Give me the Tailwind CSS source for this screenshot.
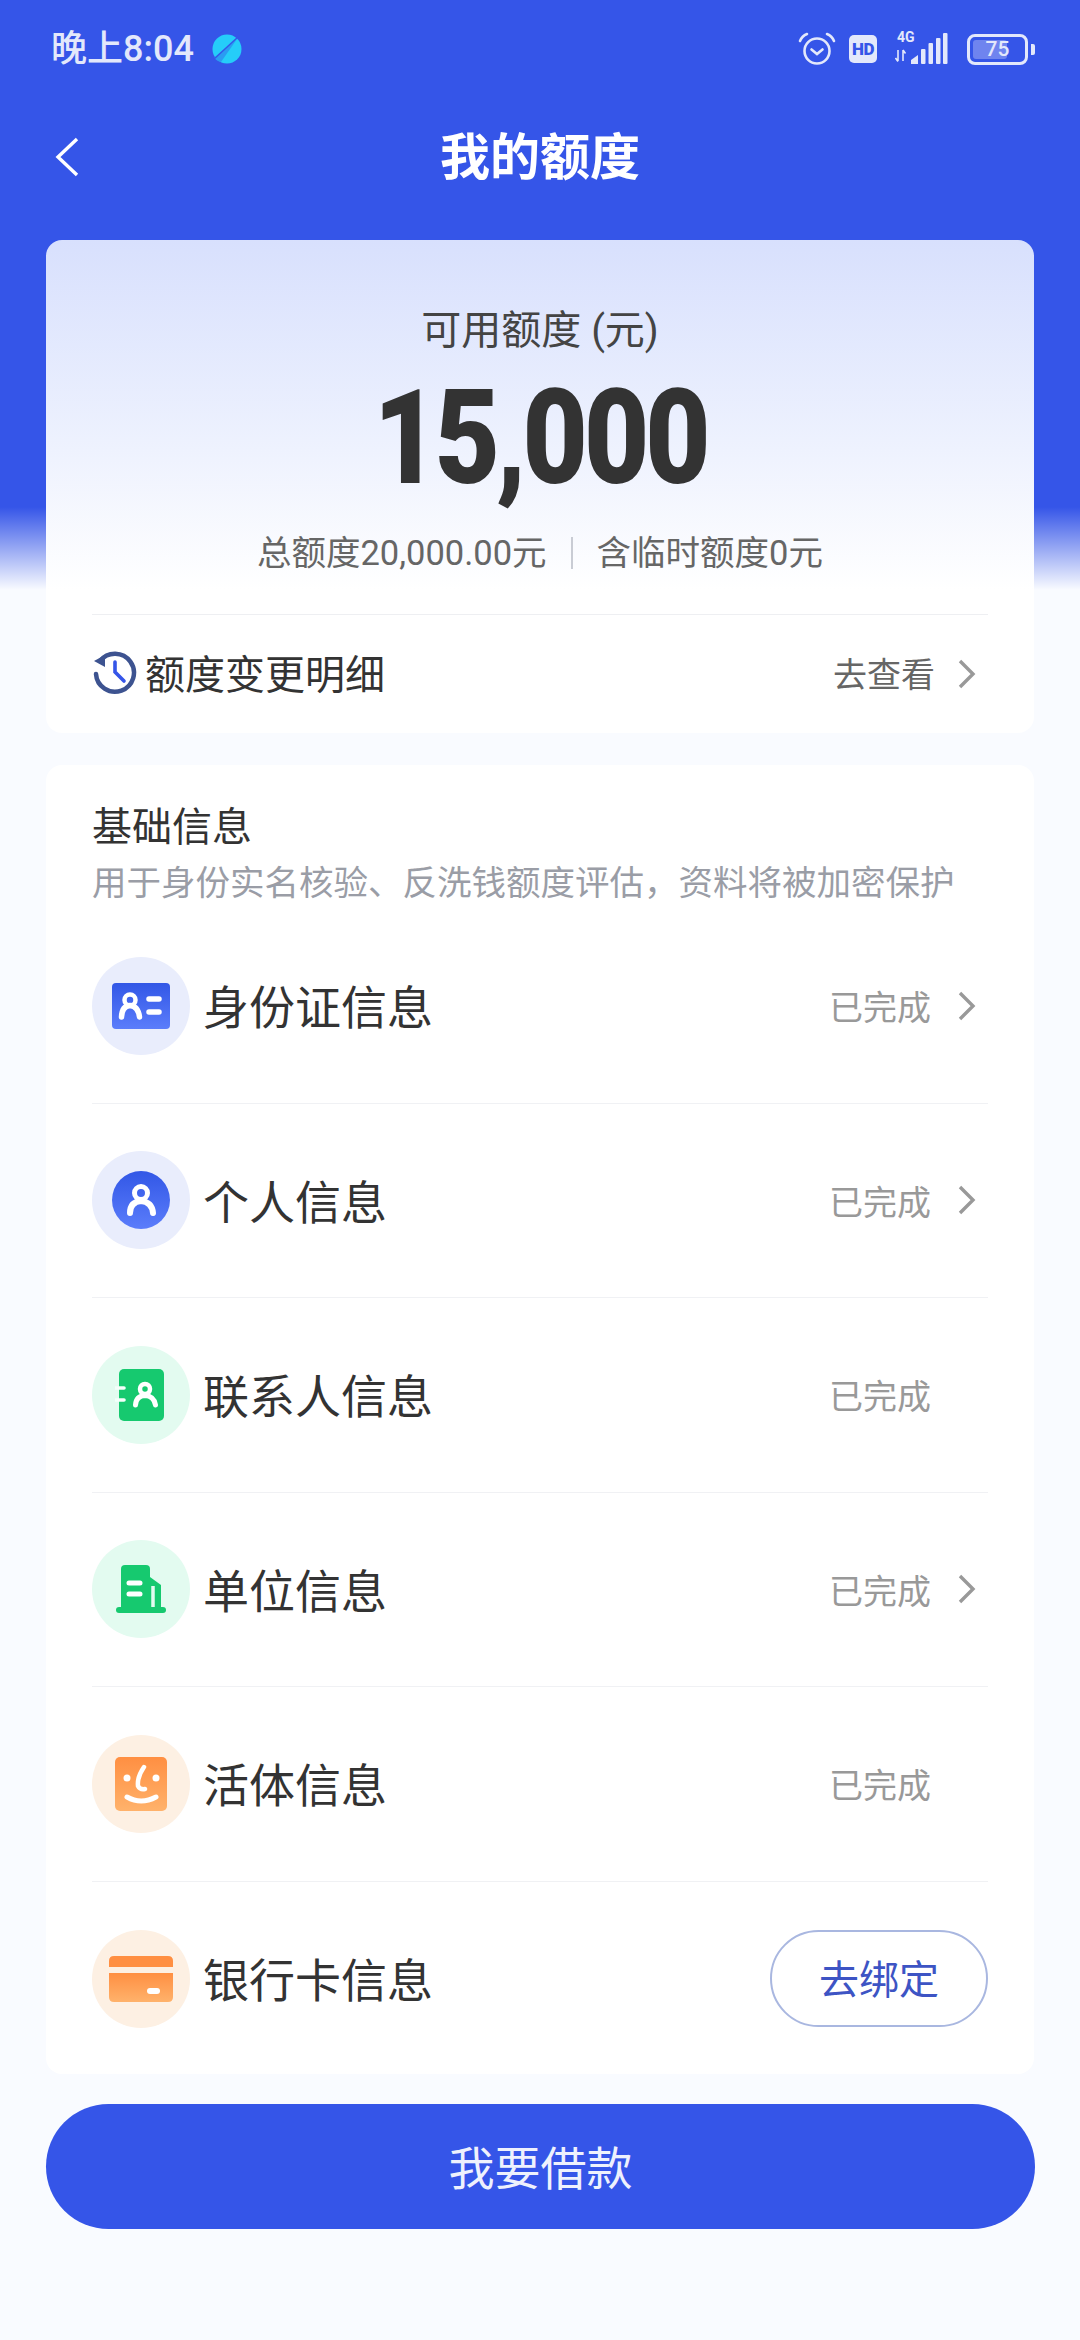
<!DOCTYPE html>
<html lang="zh-CN">
<head>
  <meta charset="UTF-8" />
  <meta name="viewport" content="width=device-width, initial-scale=1.0" />
  <title>我的额度</title>
  <script src="https://cdn.jsdelivr.net/npm/@tailwindcss/browser@4"></script>
</head>

<body class="font-[family-name:Roboto,'Noto_Sans_CJK_SC',sans-serif]">
  <div class="w-[1080px] h-[2340px] overflow-hidden bg-[linear-gradient(#3555e8_0,#3555e8_507px,#f9fbff_590px)]">

    <!-- status bar -->
    <div class="h-[98px] pl-[51px] pr-[45px] flex items-center justify-between text-[#e3e8fb]">
      <div class="flex items-center">
        <span class="text-[36px] font-medium leading-none">晚上8:04</span>
        <svg class="ml-[18px]" width="30" height="30" viewBox="0 0 30 30">
          <circle cx="15" cy="15" r="14.5" fill="#25cdf9" />
          <path d="M2 24 A14.5 14.5 0 0 0 9 28 L25 5 Z" fill="#2a9cf2" />
          <path d="M2 25 L26 3" stroke="#3555e8" stroke-width="1.5" />
        </svg>
      </div>
      <div class="flex items-center">
        <svg width="38" height="34" viewBox="0 0 38 34" fill="none" stroke="#e3e8fb" stroke-width="2.6" stroke-linecap="round">
          <circle cx="19" cy="19" r="12.5" />
          <path d="M13.5 17.5 L19 22 L24.5 17.5" />
          <path d="M2 9 Q4 4 9 2" />
          <path d="M36 9 Q34 4 29 2" />
        </svg>
        <div class="ml-[13px] w-[28px] h-[28px] rounded-[5px] bg-[#e3e8fb] text-[#3555e8] text-[17px] font-black tracking-tight leading-[28px] text-center">HD</div>
        <div class="ml-[18px] relative w-[56px] h-[32px]">
          <span class="absolute left-[2px] top-[-3px] text-[14px] font-bold leading-[14px]">4G</span>
          <svg class="absolute left-0 top-0" width="56" height="32" viewBox="0 0 56 32" fill="#e3e8fb">
            <path d="M3 17v11M0.5 25l2.5 3.5M8 28V17M8 17l2.5 3.5" stroke="#e3e8fb" stroke-width="1.6" fill="none" />
            <path d="M16 27 L23 22 V31 H16 Z" />
            <rect x="26" y="16" width="4.5" height="15" rx="1" />
            <rect x="33.5" y="10" width="4.5" height="21" rx="1" />
            <rect x="41" y="5" width="4.5" height="26" rx="1" />
            <rect x="48" y="0" width="4.5" height="31" rx="1" />
          </svg>
        </div>
        <div class="ml-[16px] relative w-[61px] h-[31px] rounded-[8px] border-[3px] border-[#e3e8fb] p-[3px]">
          <div class="h-full w-[34px] rounded-[3px] bg-[#6f84ef]"></div>
          <span class="absolute inset-0 text-center text-[21px] font-medium leading-[25px]">75</span>
        </div>
        <div class="ml-[3px] w-[4px] h-[11px] rounded-r-[2px] bg-[#e3e8fb]"></div>
      </div>
    </div>

    <!-- nav -->
    <div class="relative h-[118px] mb-[24px] flex items-center justify-center">
      <svg class="absolute left-[54px] top-[39px]" width="26" height="40" viewBox="0 0 26 40" fill="none" stroke="#fff" stroke-width="3.4">
        <path d="M23 2 L4 20 L23 38" />
      </svg>
      <h1 class="pt-[2px] text-[50px] font-bold text-white leading-none">我的额度</h1>
    </div>

    <!-- quota card -->
    <div class="mx-[46px] h-[493px] rounded-[16px] bg-[linear-gradient(#d8e0fd_0,#eef2fe_210px,#ffffff_350px)] px-[46px] pt-[61px]">
      <div class="text-center text-[40px] leading-[60px] text-[#444]">可用额度 (元)</div>
      <div class="mt-[12px] h-[130px] text-center text-[131px] font-black leading-[130px] text-[#333] scale-x-[0.86] tracking-[-0.035em]">15,000</div>
      <div class="mt-[25px] h-[50px] flex items-center justify-center text-[34.5px] text-[#666] leading-[50px]">
        <span>总额度20,000.00元</span>
        <span class="mx-[24px] w-[2px] h-[32px] bg-[#c9ccd4]"></span>
        <span>含临时额度0元</span>
      </div>
      <div class="mt-[36px] border-t border-[#eeeff2] h-[119px] flex items-center">
        <svg width="46" height="46" viewBox="0 0 46 46" fill="none" stroke-linecap="round">
          <path d="M8 10 A19 19 0 1 1 4 23" stroke="#3d5390" stroke-width="4.5" />
          <path d="M2 10 L13 16 L13 4 Z" fill="#3d5390" />
          <path d="M23 11 V21 L32 30" stroke="#3555e8" stroke-width="3.6" />
        </svg>
        <span class="ml-[7px] pt-[3px] text-[40px] text-[#333]">额度变更明细</span>
        <span class="ml-auto pt-[3px] text-[34px] text-[#666]">去查看</span>
        <svg class="ml-[22px] mr-[11px]" width="20" height="30" viewBox="0 0 20 30" fill="none" stroke="#999" stroke-width="3.4">
          <path d="M3 2 L16 15 L3 28" />
        </svg>
      </div>
    </div>

    <!-- basic info card -->
    <div class="mt-[32px] mx-[46px] h-[1309px] rounded-[16px] bg-white px-[46px] pt-[36px]">
      <div class="pt-[2px] text-[40px] leading-[50px] text-[#333]">基础信息</div>
      <div class="mt-[5px] mb-[1px] text-[34.5px] leading-[50px] text-[#9a9da6] whitespace-nowrap">用于身份实名核验、反洗钱额度评估，资料将被加密保护</div>

      <div class="h-[194.5px] border-b border-[#f0f1f4] flex items-center">
        <div class="w-[98px] h-[98px] rounded-full bg-[#e9edfc] flex items-center justify-center">
          <svg width="58" height="46" viewBox="0 0 58 46">
            <defs><linearGradient id="blue" x1="0" y1="0" x2="0" y2="1"><stop offset="0" stop-color="#3257e6" /><stop offset="1" stop-color="#5b7dfb" /></linearGradient></defs>
            <rect width="58" height="46" rx="4" fill="url(#blue)" />
            <circle cx="18" cy="17" r="5.5" fill="none" stroke="#fff" stroke-width="4.5" />
            <path d="M9.5 34 Q10 23 18 22.5 Q26 23 27.5 34" fill="none" stroke="#fff" stroke-width="5.5" stroke-linecap="round" />
            <path d="M37 16 H47 M37 29 H47" stroke="#fff" stroke-width="5.5" stroke-linecap="round" />
          </svg>
        </div>
        <span class="ml-[13px] pt-[6px] text-[46px] text-[#333]">身份证信息</span>
        <span class="ml-auto pt-[6px] text-[34px] text-[#999]">已完成</span>
        <svg class="ml-[26px] mr-[11px]" width="20" height="30" viewBox="0 0 20 30" fill="none" stroke="#999" stroke-width="3.4"><path d="M3 2 L16 15 L3 28" /></svg>
      </div>

      <div class="h-[194.5px] border-b border-[#f0f1f4] flex items-center">
        <div class="w-[98px] h-[98px] rounded-full bg-[#e9edfc] flex items-center justify-center">
          <svg width="58" height="58" viewBox="0 0 58 58">
            <circle cx="29" cy="29" r="29" fill="url(#blue)" />
            <circle cx="29" cy="22" r="6.5" fill="none" stroke="#fff" stroke-width="5" />
            <path d="M18 42 Q18 31 29 30 Q40 31 41 42" fill="none" stroke="#fff" stroke-width="6" stroke-linecap="round" />
          </svg>
        </div>
        <span class="ml-[13px] pt-[6px] text-[46px] text-[#333]">个人信息</span>
        <span class="ml-auto pt-[6px] text-[34px] text-[#999]">已完成</span>
        <svg class="ml-[26px] mr-[11px]" width="20" height="30" viewBox="0 0 20 30" fill="none" stroke="#999" stroke-width="3.4"><path d="M3 2 L16 15 L3 28" /></svg>
      </div>

      <div class="h-[194.5px] border-b border-[#f0f1f4] flex items-center">
        <div class="w-[98px] h-[98px] rounded-full bg-[#e3fbf0] flex items-center justify-center">
          <svg width="52" height="52" viewBox="0 0 52 52">
            <rect x="4" width="45" height="52" rx="5" fill="#16c96f" />
            <path d="M0 19 H9 M0 31 H9" stroke="#f4fffa" stroke-width="3.6" stroke-linecap="round" />
            <circle cx="30" cy="20" r="5" fill="none" stroke="#fff" stroke-width="4.5" />
            <path d="M20.5 36 Q21 27 30 26.5 Q39 27 40.5 36" fill="none" stroke="#fff" stroke-width="5" stroke-linecap="round" />
          </svg>
        </div>
        <span class="ml-[13px] pt-[6px] text-[46px] text-[#333]">联系人信息</span>
        <span class="ml-auto mr-[57px] pt-[6px] text-[34px] text-[#999]">已完成</span>
      </div>

      <div class="h-[194.5px] border-b border-[#f0f1f4] flex items-center">
        <div class="w-[98px] h-[98px] rounded-full bg-[#e3fbf0] flex items-center justify-center">
          <svg width="50" height="48" viewBox="0 0 50 48">
            <path d="M5 44 V4 Q5 0 9 0 H30 Q34 0 34 4 V44 Z" fill="#16c96f" />
            <path d="M34 12 L45 20 V44 H34 Z" fill="#16c96f" />
            <path d="M37 21 V43" stroke="#e3fbf0" stroke-width="3.5" />
            <path d="M13 18 H24 M13 29 H24" stroke="#fff" stroke-width="5" stroke-linecap="round" />
            <rect y="42" width="50" height="6" rx="3" fill="#16c96f" />
          </svg>
        </div>
        <span class="ml-[13px] pt-[6px] text-[46px] text-[#333]">单位信息</span>
        <span class="ml-auto pt-[6px] text-[34px] text-[#999]">已完成</span>
        <svg class="ml-[26px] mr-[11px]" width="20" height="30" viewBox="0 0 20 30" fill="none" stroke="#999" stroke-width="3.4"><path d="M3 2 L16 15 L3 28" /></svg>
      </div>

      <div class="h-[194.5px] border-b border-[#f0f1f4] flex items-center">
        <div class="w-[98px] h-[98px] rounded-full bg-[#fdf0e3] flex items-center justify-center">
          <svg width="52" height="54" viewBox="0 0 52 54">
            <defs><linearGradient id="orange" x1="0" y1="0" x2="0" y2="1"><stop offset="0" stop-color="#ff8f42" /><stop offset="1" stop-color="#ffb26b" /></linearGradient></defs>
            <rect width="52" height="54" rx="5" fill="url(#orange)" />
            <circle cx="12" cy="21" r="3.5" fill="#fff" />
            <circle cx="41" cy="21" r="3.5" fill="#fff" />
            <path d="M29 10 Q22 20 23 29 Q25 33 30 32" fill="none" stroke="#fff" stroke-width="4.5" stroke-linecap="round" />
            <path d="M12 40 Q26 48 41 40" fill="none" stroke="#fff" stroke-width="5" stroke-linecap="round" />
          </svg>
        </div>
        <span class="ml-[13px] pt-[6px] text-[46px] text-[#333]">活体信息</span>
        <span class="ml-auto mr-[57px] pt-[6px] text-[34px] text-[#999]">已完成</span>
      </div>

      <div class="h-[194.5px] flex items-center">
        <div class="w-[98px] h-[98px] rounded-full bg-[#fdf0e3] flex items-center justify-center">
          <svg width="64" height="46" viewBox="0 0 64 46">
            <path d="M0 11 V5 Q0 0 5 0 H59 Q64 0 64 5 V11 Z" fill="#ff8f42" />
            <path d="M0 17 H64 V41 Q64 46 59 46 H5 Q0 46 0 41 Z" fill="url(#orange)" />
            <path d="M41 35 H48" stroke="#fff" stroke-width="6" stroke-linecap="round" />
          </svg>
        </div>
        <span class="ml-[13px] pt-[6px] text-[46px] text-[#333]">银行卡信息</span>
        <div class="ml-auto w-[218px] h-[97px] pt-[5px] rounded-full border-2 border-[#a9b7e0] flex items-center justify-center text-[40px] text-[#3d54c4]">去绑定</div>
      </div>
    </div>

    <!-- action -->
    <button class="block mt-[30px] mx-[46px] w-[989px] h-[125px] pt-[5px] rounded-full bg-[#3555e8] text-[46px] text-[#eef1fd]">我要借款</button>
  </div>
</body>
</html>
